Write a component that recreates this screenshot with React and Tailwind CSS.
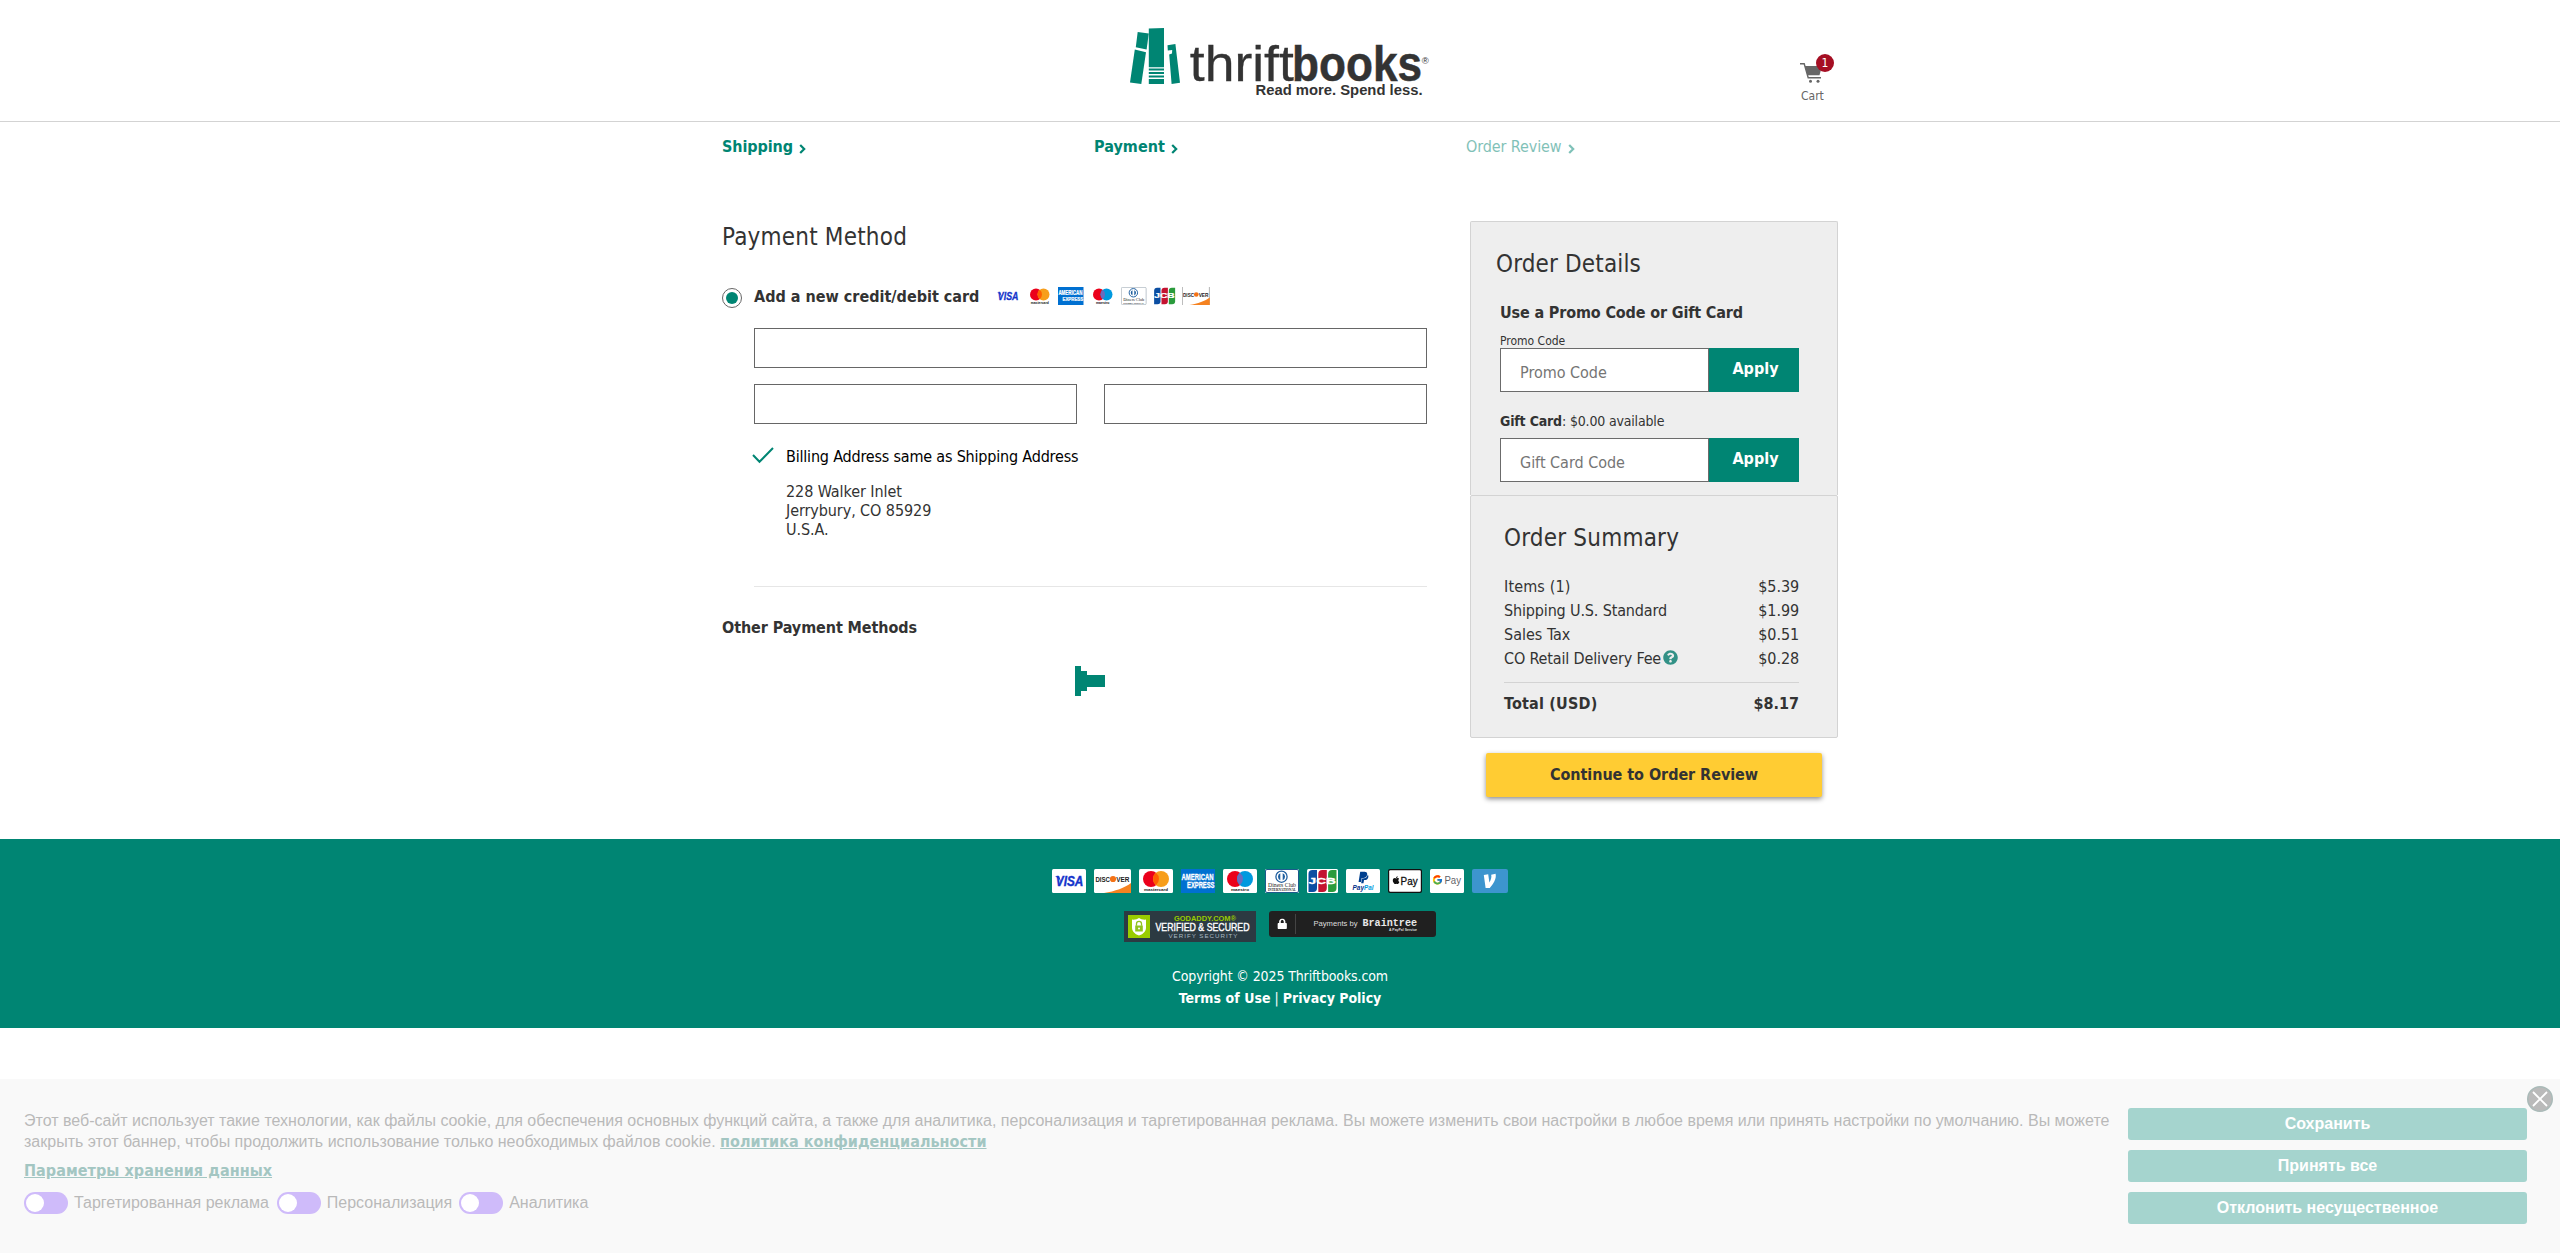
import { FaApple, FaLock, FaPaypal, FaQuestionCircle } from "react-icons/fa";
import { FcGoogle } from "react-icons/fc";

const SANS = "Liberation Sans, sans-serif";

function Logo() {
  return (
    <svg width="300" height="76" viewBox="0 0 300 76" className="mt-[25px]">
      <g fill="#008573">
        <path d="M7.7 7 L18.8 8.6 L16.6 24.6 L5.8 22.2 Z" />
        <path d="M4.8 24.6 L16 27.3 L11.3 59 L0 57.6 Z" />
        <path d="M18.8 3.6 L34 3 V42.3 H18.8 Z" />
        <path d="M18.8 43.6 H34 V45.6 H18.8 Z M18.8 47 H34 V49 H18.8 Z M18.8 50.4 H34 V52.4 H18.8 Z M18.8 54 H34 V59 H18.8 Z" />
        <path d="M37.5 20.2 L45.4 19 L50 57.8 L41.6 59 L39.2 29.4 L42 28.4 L42.2 25 L37.8 25.6 Z" />
      </g>
      <g fill="#333333" fontFamily={SANS}>
        <text x="59.8" y="55.5" fontSize="50" stroke="#333" strokeWidth=".3" textLength="104" lengthAdjust="spacingAndGlyphs">thrift</text>
        <text x="162" y="55.5" fontSize="50" fontWeight="700" stroke="#333" strokeWidth=".5" textLength="130" lengthAdjust="spacingAndGlyphs">books</text>
        <text x="125.5" y="70" fontSize="14.5" fontWeight="700" textLength="167" lengthAdjust="spacingAndGlyphs">Read more. Spend less.</text>
        <text x="291.8" y="38.5" fontSize="9.5">®</text>
      </g>
    </svg>
  );
}

function Card({ w, bg = "#fff", rx = 1.5, small, children }) {
  const k = small ? 0.75 : 1;
  return (
    <svg width={w * k} height={24 * k} viewBox={`0 0 ${w} 24`} fontFamily={SANS} className="block shrink-0">
      <rect width={w} height="24" rx={rx} fill={bg} />
      {children}
    </svg>
  );
}

const Visa = (p) => (
  <Card w={34} {...p}>
    <path d="M3 7.2 H7.2 L9.4 14 L6.8 9.6 Z" fill="#1434cb" />
    <text x="3.8" y="17" fontSize="13.8" fontWeight="700" fontStyle="italic" fill="#1434cb" stroke="#1434cb" strokeWidth=".4" textLength="27.5" lengthAdjust="spacingAndGlyphs">VISA</text>
  </Card>
);
const Discover = (p) => (
  <Card w={37} {...p}>
    {p.small && <path d="M.5 0 V24 M36.5 0 V24" stroke="#999" />}
    <path d="M10 24 C21 22.5 31 18.5 37 14 V24 Z" fill="#f58220" />
    <text x="1.4" y="12.8" fontSize="8" fontWeight="700" fill="#222" textLength="14.6" lengthAdjust="spacingAndGlyphs">DISC</text>
    <circle cx="19" cy="10" r="3.1" fill="#f47216" />
    <text x="22.2" y="12.8" fontSize="8" fontWeight="700" fill="#222" textLength="13.2" lengthAdjust="spacingAndGlyphs">VER</text>
  </Card>
);
function Rings({ left, mid, right, label, x, len, ...p }) {
  return (
    <Card w={34} {...p}>
      <circle cx="12" cy="10" r="8" fill={left} />
      <circle cx="22" cy="10" r="8" fill={right} />
      <path d="M17 3.8 A8 8 0 0 1 17 16.2 A8 8 0 0 1 17 3.8 Z" fill={mid} />
      <text x={x} y="22" fontSize="4.2" fontWeight="700" fill="#111" textLength={len} lengthAdjust="spacingAndGlyphs">{label}</text>
    </Card>
  );
}
const Mastercard = (p) => <Rings left="#eb001b" mid="#ff5f00" right="#f79e1b" label="mastercard" x={5} len={24} {...p} />;
const Maestro = (p) => <Rings left="#eb001b" mid="#6c6bbd" right="#0099df" label="maestro" x={8} len={18} {...p} />;
const Amex = (p) => (
  <Card w={34} bg="#0070d1" rx={0} {...p}>
    <g fill="#fff" stroke="#fff" strokeWidth=".3" fontWeight="700">
      <text x=".5" y="11" fontSize="8.6" textLength="32" lengthAdjust="spacingAndGlyphs">AMERICAN</text>
      <text x="6" y="19" fontSize="8.2" textLength="27.5" lengthAdjust="spacingAndGlyphs">EXPRESS</text>
    </g>
  </Card>
);
const Diners = (p) => (
  <Card w={34} {...p}>
    <rect x=".5" y=".5" width="33" height="23" rx="1.5" fill="none" stroke={p.small ? "#a9b4bd" : "#1c5a8c"} />
    <circle cx="16.5" cy="7.7" r="5.6" fill="#fff" stroke="#1f5f9f" strokeWidth="1.3" />
    <path d="M15.3 4.2 A3.8 3.8 0 0 0 15.3 11.2 Z M17.7 4.2 A3.8 3.8 0 0 1 17.7 11.2 Z" fill="#1f5f9f" />
    <g fill="#222" fontFamily="Liberation Serif, serif">
      <text x="3" y="18.2" fontSize="5.2" textLength="28" lengthAdjust="spacingAndGlyphs">Diners Club</text>
      <text x="3" y="22.2" fontSize="3.5" fontWeight="700" textLength="28" lengthAdjust="spacingAndGlyphs">INTERNATIONAL</text>
    </g>
  </Card>
);
const Jcb = (p) => (
  <Card w={31} {...p}>
    <path d="M1.5 5 Q1.5 1 5.5 1 H10 V19 Q10 23 6 23 H1.5 Z" fill="#0b4ea2" />
    <path d="M11.3 5 Q11.3 1 15.3 1 H19.8 V19 Q19.8 23 15.8 23 H11.3 Z" fill="#c41230" />
    <path d="M21.1 5 Q21.1 1 25.1 1 H29.5 V19 Q29.5 23 25.5 23 H21.1 Z" fill="#2a9b3c" />
    <text x="1.6" y="15" fontSize="9" fontWeight="700" fill="#fff" stroke="#fff" strokeWidth=".3" textLength="27.4" lengthAdjust="spacingAndGlyphs">JCB</text>
  </Card>
);
const PayPal = () => (
  <Card w={34}>
    <FaPaypal x="11" y="2" size={13} color="#00408f" />
    <g fontSize="7.4" fontWeight="700" fontStyle="italic">
      <text x="6.6" y="21" fill="#003087" textLength="11.4" lengthAdjust="spacingAndGlyphs">Pay</text>
      <text x="18" y="21" fill="#009cde" textLength="9.4" lengthAdjust="spacingAndGlyphs">Pal</text>
    </g>
  </Card>
);
const ApplePay = () => (
  <Card w={34} bg="#111" rx={2}>
    <rect x="1.2" y="1.2" width="31.6" height="21.6" rx="1.2" fill="#fff" />
    <FaApple x="3.6" y="6.6" size={9} color="#111" />
    <text x="12.6" y="15.6" fontSize="10.4" fill="#111" stroke="#111" strokeWidth=".3" textLength="17" lengthAdjust="spacingAndGlyphs">Pay</text>
  </Card>
);
const GPay = () => (
  <Card w={34}>
    <FcGoogle x="2" y="5.4" size={11} />
    <text x="14.4" y="15.4" fontSize="10.4" fill="#5f6368" textLength="16.6" lengthAdjust="spacingAndGlyphs">Pay</text>
  </Card>
);
const Venmo = () => (
  <Card w={36} bg="#3d95ce" rx={2}>
    <path d="M11.8 5.9 L16.2 5.3 L17.4 13.6 C18.7 11.4 19.9 8.2 19.2 5.7 L23.6 4.8 C24.8 10 20.9 15.4 17.8 19 H13.6 Z" fill="#fff" />
  </Card>
);

function GoDaddy() {
  return (
    <svg width="132" height="31" viewBox="0 0 132 31" fontFamily={SANS}>
      <rect width="132" height="31" fill="#2c3a42" />
      <rect x="4" y="4" width="22" height="23" fill="#99cc00" />
      <path d="M8 8.6 Q12.5 9 15 7 Q17.5 9 22 8.6 V17 Q22 22 15 24.6 Q8 22 8 17 Z" fill="#fff" />
      <path d="M11.2 14.5 H18.8 V20.5 H11.2 Z" fill="#8fc31f" />
      <path d="M12.5 14.8 V12.8 A2.5 2.5 0 0 1 17.5 12.8 V14.8" fill="none" stroke="#8fc31f" strokeWidth="1.3" />
      <circle cx="15" cy="17.5" r="1" fill="#fff" />
      <text x="50" y="9.8" fontSize="6.6" fontWeight="700" fill="#99cc00" textLength="62" lengthAdjust="spacingAndGlyphs">GODADDY.COM®</text>
      <text x="31.5" y="20" fontSize="11" fill="#fff" stroke="#fff" strokeWidth=".4" textLength="94" lengthAdjust="spacingAndGlyphs">VERIFIED &amp; SECURED</text>
      <text x="44.5" y="27" fontSize="6.2" fill="#a9b9c4" textLength="69" lengthAdjust="spacing">VERIFY SECURITY</text>
    </svg>
  );
}

function Braintree() {
  return (
    <svg width="167" height="26" viewBox="0 0 167 26" fontFamily={SANS}>
      <rect width="167" height="26" rx="3" fill="#202020" />
      <FaLock x="8" y="7.4" size={10.5} color="#fff" />
      <path d="M26.500 3 V23" stroke="#444" />
      <text x="44.5" y="14.8" fontSize="7.5" fill="#ddd" textLength="44" lengthAdjust="spacingAndGlyphs">Payments by</text>
      <text x="93.5" y="14.8" fontSize="10" fontWeight="700" fill="#e8e8e8" fontFamily="Liberation Mono, monospace" textLength="54.5" lengthAdjust="spacingAndGlyphs">Braintree</text>
      <text x="120" y="19.6" fontSize="4" fontWeight="700" fill="#ddd" textLength="28" lengthAdjust="spacingAndGlyphs">A PayPal Service</text>
    </svg>
  );
}

function Chevron() {
  return (
    <svg width="7" height="10" viewBox="0 0 7 10" className="mt-[3px] ml-[6px]">
      <path d="M1.200 1 L5.200 5 L1.200 9" fill="none" stroke="currentColor" strokeWidth="2.200" />
    </svg>
  );
}

function CodeField({ placeholder }) {
  return (
    <div className="flex h-11">
      <input
        placeholder={placeholder}
        className="h-11 w-[209px] border border-[#6b6b6b] bg-white pt-[5px] pl-[19px] tracking-[-0.02px] placeholder:text-[#757575]"
      />
      <button className="h-11 w-[90px] bg-[#008573] pb-[3px] pl-[3px] font-bold text-white">Apply</button>
    </div>
  );
}

const LINES = [
  ["Items (1)", "$5.39", "tracking-[0.15px]"],
  ["Shipping U.S. Standard", "$1.99", "tracking-[-0.15px]"],
  ["Sales Tax", "$0.51", ""],
  ["CO Retail Delivery Fee", "$0.28", "tracking-[-0.16px]"],
];

const TOGGLES = [
  ["Таргетированная реклама", "mr-2"],
  ["Персонализация", "mr-[7px]"],
  ["Аналитика", ""],
];

export default function App() {
  return (
    <div className="flex h-[1253px] flex-col overflow-hidden bg-white font-['DejaVu_Sans_Condensed','DejaVu_Sans',sans-serif] text-[16px] leading-6 text-[#333]">
      <header className="h-[122px] shrink-0 border-b border-[#d3d3d3]">
        <div className="mx-auto grid w-[1116px] grid-cols-[408px_300px_408px]">
          <div />
          <Logo />
          <div className="flex justify-end pt-[63px] pr-[14px]">
            <div className="relative w-6">
              <svg width="23" height="21" viewBox="0 0 23 21" fill="#666">
                <path d="M0 .7 H4.200 L8.200 14.700 H21" fill="none" stroke="#666" strokeWidth="1.400" />
                <path d="M4.800 3 H22 L19.500 12.300 H7.500 Z" />
                <circle cx="10.500" cy="18.300" r="1.500" />
                <circle cx="18" cy="18.300" r="1.500" />
              </svg>
              <span className="absolute -top-[9px] left-4 flex h-[18px] w-[18px] items-center justify-center rounded-full bg-[#a50e23] text-[12px] leading-none text-white">1</span>
              <div className="mt-1 ml-px text-[12px] leading-4 text-[#666]">Cart</div>
            </div>
          </div>
        </div>
      </header>

      <main className="mx-auto h-[717px] w-[1116px] shrink-0 pt-[13px]">
        <nav className="grid grid-cols-3 text-[#008573]">
          <div className="flex items-center font-bold tracking-[-0.1px]">Shipping<Chevron /></div>
          <div className="flex items-center font-bold tracking-[0.05px]">Payment<Chevron /></div>
          <div className="flex items-center tracking-[-0.1px] opacity-50">Order Review<Chevron /></div>
        </nav>

        <div className="mt-[62px] flex justify-between">
          <section className="w-[705px]">
            <h1 className="text-[24px] leading-8 tracking-[0.2px]">Payment Method</h1>
            <div className="mt-8 flex h-6">
              <span className="mt-[3px] flex h-5 w-5 items-center justify-center rounded-full border border-[#666]">
                <span className="h-3 w-3 rounded-full bg-[#008573]" />
              </span>
              <span className="ml-3 w-[241px] font-bold">Add a new credit/debit card</span>
              <span className="mt-[2px] flex gap-1.5">
                <Visa small /><Mastercard small /><Amex small /><Maestro small /><Diners small /><Jcb small /><Discover small />
              </span>
            </div>
            <div className="mt-[19px] ml-8">
              <input className="block h-10 w-full border border-[#666]" />
              <div className="mt-4 flex justify-between">
                <input className="h-10 w-[323px] border border-[#666]" />
                <input className="h-10 w-[323px] border border-[#666]" />
              </div>
              <div className="mt-[21px] flex text-black">
                <svg width="22" height="17" viewBox="0 0 22 17" className="mt-[2px] -ml-[2px]">
                  <path d="M1 8 L7.500 14.800 L21 1" fill="none" stroke="#008573" strokeWidth="2" />
                </svg>
                <span className="ml-3 tracking-[-0.19px]">Billing Address same as Shipping Address</span>
              </div>
              <address className="mt-[13px] ml-8 leading-[19px] tracking-[-0.08px] not-italic">
                228 Walker Inlet<br />Jerrybury, CO 85929<br />U.S.A.
              </address>
              <hr className="mt-[47px] border-[#e6e6e6]" />
            </div>
            <h2 className="mt-[29px] font-bold tracking-[-0.09px]">Other Payment Methods</h2>
            <div className="mt-[26px] ml-[353px] flex items-center">
              <span className="h-[30px] w-1.5 bg-[#008573]" />
              <span className="h-5 w-1.5 bg-[#008573]" />
              <span className="h-3 w-[18px] bg-[#008573]" />
            </div>
          </section>

          <aside className="w-[368px]">
            <div className="h-[274px] rounded-t-[2px] border-x border-t border-[#d3d3d3] bg-[#eee] pt-[26px] pl-[29px]">
              <h2 className="-ml-1 text-[24px] leading-8 tracking-[0.15px]">Order Details</h2>
              <h3 className="mt-[21px] font-bold tracking-[-0.15px]">Use a Promo Code or Gift Card</h3>
              <div className="mt-[9px] -mb-px text-[12px] leading-[15px]">Promo Code</div>
              <CodeField placeholder="Promo Code" />
              <div className="mt-[19px] mb-[7px] text-[14px] leading-5 tracking-[-0.17px]"><b>Gift Card</b>: $0.00 available</div>
              <CodeField placeholder="Gift Card Code" />
            </div>
            <div className="h-[243px] rounded-[2px] border border-[#d3d3d3] bg-[#eee] pt-[26px] pr-[38px] pl-[33px]">
              <h2 className="text-[24px] leading-8 tracking-[0.2px]">Order Summary</h2>
              <div className="mt-[21px]">
                {LINES.map(([name, price, cls]) => (
                  <div key={name} className="flex justify-between">
                    <span className={`flex ${cls}`}>
                      {name}
                      {name.startsWith("CO") && <FaQuestionCircle className="mt-[3px] ml-[2px] h-[15px] w-[15px] text-[#329186]" />}
                    </span>
                    <span className="tracking-[-0.1px]">{price}</span>
                  </div>
                ))}
              </div>
              <div className="mt-[11px] flex justify-between border-t border-[#d3d3d3] pt-[9px] font-bold">
                <span className="tracking-[0.2px]">Total (USD)</span>
                <span>$8.17</span>
              </div>
            </div>
            <button className="mx-4 mt-[15px] block h-11 w-[336px] rounded-[2px] bg-[#ffcc33] font-bold tracking-[-0.05px] shadow-[0_2px_5px_rgba(0,0,0,0.45)]">
              Continue to Order Review
            </button>
          </aside>
        </div>
      </main>

      <footer className="flex h-[189px] shrink-0 flex-col items-center bg-[#008573] pt-[30px] text-[14px] leading-[22px] text-white">
        <div className="flex gap-2">
          <Visa /><Discover /><Mastercard /><Amex /><Maestro /><Diners /><Jcb /><PayPal /><ApplePay /><GPay /><Venmo />
        </div>
        <div className="mt-[18px] flex h-[31px] items-start gap-[13px]">
          <GoDaddy />
          <Braintree />
        </div>
        <div className="mt-[23px] tracking-[-0.12px]">Copyright © 2025 Thriftbooks.com</div>
        <div><b className="tracking-[0.05px]">Terms of Use</b> | <b className="tracking-[-0.02px]">Privacy Policy</b></div>
      </footer>

      <div className="relative mt-[51px] flex h-[174px] shrink-0 justify-between bg-[#f9f9f9] pr-[33px] pl-6 font-['Liberation_Sans',sans-serif] text-[#b9b9b9]">
        <div className="w-[2092px] pt-[31px]">
          <p className="leading-[21px]">
            Этот веб-сайт использует такие технологии, как файлы cookie, для обеспечения основных функций сайта, а также для аналитика, персонализация и таргетированная реклама. Вы можете изменить свои настройки в любое время или принять настройки по умолчанию. Вы можете закрыть этот баннер, чтобы продолжить использование только необходимых файлов cookie.{" "}
            <a className="font-['DejaVu_Sans_Condensed',sans-serif] font-bold tracking-[0.03px] text-[#a3c6c2] underline">политика конфиденциальности</a>
          </p>
          <a className="mt-[7px] block font-['DejaVu_Sans_Condensed',sans-serif] font-bold tracking-[0.05px] text-[#a3c6c2] underline">Параметры хранения данных</a>
          <div className="mt-2 flex items-center">
            {TOGGLES.map(([label, cls]) => (
              <label key={label} className={`flex items-center ${cls}`}>
                <span className="mr-1.5 flex h-[22px] w-11 items-center rounded-full bg-[#cfbbfa] pl-[2px]">
                  <span className="h-[18px] w-[18px] rounded-full bg-white" />
                </span>
                {label}
              </label>
            ))}
          </div>
        </div>
        <div className="flex w-[399px] flex-col gap-2.5 pt-[29px] font-bold text-white">
          <button className="h-8 rounded-[3px] bg-[#a5d4ce]">Сохранить</button>
          <button className="h-8 rounded-[3px] bg-[#a5d4ce]">Принять все</button>
          <button className="h-8 rounded-[3px] bg-[#a5d4ce]">Отклонить несущественное</button>
        </div>
        <svg width="26" height="26" viewBox="0 0 26 26" className="absolute top-[7px] right-[7px]">
          <circle cx="13" cy="13" r="12.300" fill="#bababa" stroke="#a9bab8" strokeWidth="1.400" />
          <path d="M6 6 L20 20 M20 6 L6 20" stroke="#fff" strokeWidth="1.800" />
        </svg>
      </div>
    </div>
  );
}
